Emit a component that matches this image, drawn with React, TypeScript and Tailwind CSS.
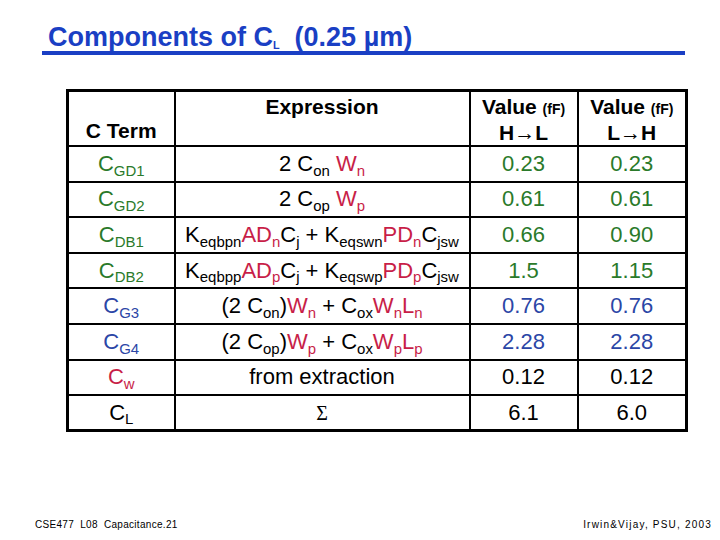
import type { ReactNode } from "react"

const G = "text-[#2a7a2a]"
const B = "text-[#2b46a6]"
const R = "text-[#c81e48]"

function Sub({ children, className = "" }: { children: ReactNode; className?: string }) {
  return <span className={`relative top-[0.32em] text-[0.68em] leading-none ${className}`}>{children}</span>
}

function Red({ children, sub }: { children: ReactNode; sub: string }) {
  return (
    <span className={R}>
      {children}
      <Sub>{sub}</Sub>
    </span>
  )
}

type Row = {
  term: ReactNode
  expr: ReactNode
  hl: string
  lh: string
  valColor: string
}

const rows: Row[] = [
  {
    term: <span className={G}>C<Sub>GD1</Sub></span>,
    expr: <>2 C<Sub>on</Sub> <Red sub="n">W</Red></>,
    hl: "0.23",
    lh: "0.23",
    valColor: G,
  },
  {
    term: <span className={G}>C<Sub>GD2</Sub></span>,
    expr: <>2 C<Sub>op</Sub> <Red sub="p">W</Red></>,
    hl: "0.61",
    lh: "0.61",
    valColor: G,
  },
  {
    term: <span className={G}>C<Sub>DB1</Sub></span>,
    expr: (
      <>
        K<Sub>eqbpn</Sub><Red sub="n">AD</Red>C<Sub>j</Sub> + K<Sub>eqswn</Sub><Red sub="n">PD</Red>C<Sub>jsw</Sub>
      </>
    ),
    hl: "0.66",
    lh: "0.90",
    valColor: G,
  },
  {
    term: <span className={G}>C<Sub>DB2</Sub></span>,
    expr: (
      <>
        K<Sub>eqbpp</Sub><Red sub="p">AD</Red>C<Sub>j</Sub> + K<Sub>eqswp</Sub><Red sub="p">PD</Red>C<Sub>jsw</Sub>
      </>
    ),
    hl: "1.5",
    lh: "1.15",
    valColor: G,
  },
  {
    term: <span className={B}>C<Sub>G3</Sub></span>,
    expr: (
      <>
        (2 C<Sub>on</Sub>)<Red sub="n">W</Red> + C<Sub>ox</Sub><Red sub="n">W</Red><Red sub="n">L</Red>
      </>
    ),
    hl: "0.76",
    lh: "0.76",
    valColor: B,
  },
  {
    term: <span className={B}>C<Sub>G4</Sub></span>,
    expr: (
      <>
        (2 C<Sub>op</Sub>)<Red sub="p">W</Red> + C<Sub>ox</Sub><Red sub="p">W</Red><Red sub="p">L</Red>
      </>
    ),
    hl: "2.28",
    lh: "2.28",
    valColor: B,
  },
  {
    term: <span className={R}>C<Sub>w</Sub></span>,
    expr: <>from extraction</>,
    hl: "0.12",
    lh: "0.12",
    valColor: "text-black",
  },
  {
    term: <span className="text-black">C<Sub>L</Sub></span>,
    expr: <span className="font-['Liberation_Serif',serif] text-[20px]">Σ</span>,
    hl: "6.1",
    lh: "6.0",
    valColor: "text-black",
  },
]

export default function App() {
  return (
    <div className="flex h-[540px] w-[720px] flex-col bg-white font-['Liberation_Sans',Arial,sans-serif] text-black">
      <div className="ml-[42px] mt-[23px] w-[643px] border-b-[4px] border-[#1a3fc4] pl-[6px]">
        <h1 className="text-[27px] font-bold leading-[28px] text-[#1a3fc4]">
          Components of C<Sub className="!text-[0.4em]">L</Sub>&nbsp;&nbsp;(0.25 µm)
        </h1>
      </div>

      <table className="ml-[66px] mt-[34px] w-[619px] table-fixed border-collapse border-[3px] border-black">
        <colgroup>
          <col className="w-[107px]" />
          <col className="w-[295px]" />
          <col className="w-[108px]" />
          <col className="w-[109px]" />
        </colgroup>
        <thead>
          <tr className="h-[55px] text-[21px] font-bold">
            <th className="border-2 border-black pb-[2px] align-bottom leading-[24px]">C Term</th>
            <th className="border-2 border-black pt-[3px] align-top leading-[24px]">Expression</th>
            <th className="border-2 border-black pt-[3px] align-top leading-[24px]">
              <div>
                Value <span className="text-[14px]">(fF)</span>
              </div>
              <div>H→L</div>
            </th>
            <th className="border-2 border-black pt-[3px] align-top leading-[24px]">
              <div>
                Value <span className="text-[14px]">(fF)</span>
              </div>
              <div>L→H</div>
            </th>
          </tr>
        </thead>
        <tbody className="text-[22px] leading-[26px]">
          {rows.map((row, i) => (
            <tr key={i} className="h-[35.6px]">
              <td className="border-2 border-black text-center align-middle">{row.term}</td>
              <td className="whitespace-nowrap border-2 border-black text-center align-middle">{row.expr}</td>
              <td className={`border-2 border-black text-center align-middle ${row.valColor}`}>{row.hl}</td>
              <td className={`border-2 border-black text-center align-middle ${row.valColor}`}>{row.lh}</td>
            </tr>
          ))}
        </tbody>
      </table>

      <div className="mt-auto flex items-center justify-between pb-[8px] pl-[35px] pr-[8px] text-[10px]">
        <span className="tracking-[0.3px]">CSE477&nbsp; L08&nbsp; Capacitance.21</span>
        <span className="tracking-[1.2px]">Irwin&amp;Vijay, PSU, 2003</span>
      </div>
    </div>
  )
}
